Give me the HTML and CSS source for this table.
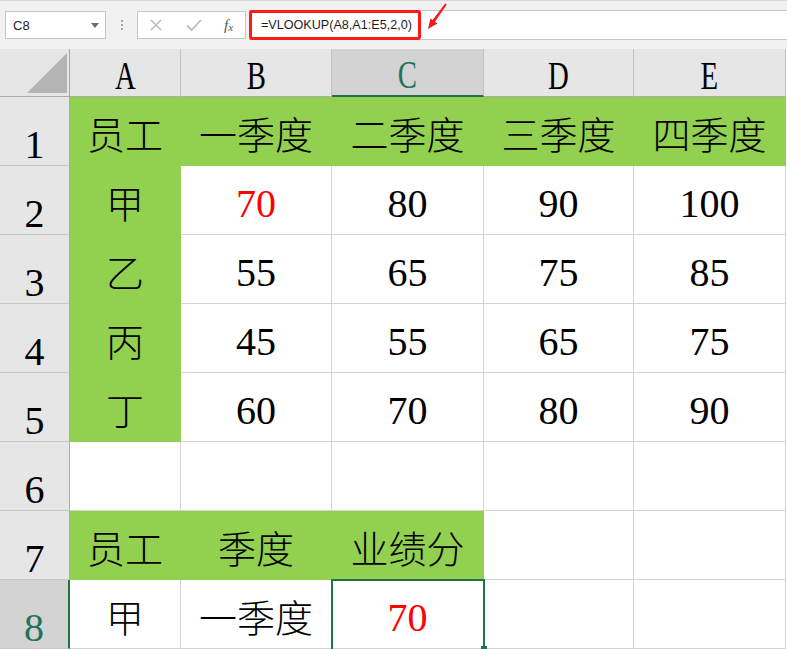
FILE: index.html
```html
<!DOCTYPE html>
<html lang="zh">
<head>
<meta charset="utf-8">
<title>VLOOKUP</title>
<link rel="stylesheet" href="styles.css">
</head>
<body>
<div class="toolbar">
  <div class="namebox"><span class="name">C8</span><span class="caret"></span></div>
  <div class="grip"><i></i><i></i><i></i></div>
  <div class="fxbox">
    <svg class="ico" width="12" height="12" viewBox="0 0 12 12"><path d="M1 1L11 11M11 1L1 11" stroke="#bdbdbd" stroke-width="1.6" fill="none"/></svg>
    <svg class="ico" width="16" height="12" viewBox="0 0 16 12"><path d="M1 6.5L5.5 11L15 1" stroke="#bdbdbd" stroke-width="1.8" fill="none"/></svg>
    <span class="fx">f<sub>x</sub></span>
  </div>
  <div class="formula"><div class="formula-box">=VLOOKUP(A8,A1:E5,2,0)</div></div>
  <svg class="arrow" width="32" height="34" viewBox="0 0 32 34"><polygon points="8,28 10.4,17.4 12.6,19 25.2,2.4 26.8,3.6 15,20.8 17.4,22.4" fill="#f21c1c"/></svg>
</div>
<div class="sheet">
  <div class="corner"><span class="tri"></span></div>
  <div class="ch"><span class="lt">A</span></div>
  <div class="ch"><span class="lt">B</span></div>
  <div class="ch ch-sel"><span class="lt">C</span></div>
  <div class="ch"><span class="lt">D</span></div>
  <div class="ch ch-last"><span class="lt">E</span></div>

  <div class="rh">1</div>
  <div class="c g">员工</div><div class="c g">一季度</div><div class="c g">二季度</div><div class="c g">三季度</div><div class="c g">四季度</div>

  <div class="rh">2</div>
  <div class="c g">甲</div><div class="c n red">70</div><div class="c n">80</div><div class="c n">90</div><div class="c n">100</div>

  <div class="rh">3</div>
  <div class="c g">乙</div><div class="c n">55</div><div class="c n">65</div><div class="c n">75</div><div class="c n">85</div>

  <div class="rh">4</div>
  <div class="c g">丙</div><div class="c n">45</div><div class="c n">55</div><div class="c n">65</div><div class="c n">75</div>

  <div class="rh">5</div>
  <div class="c g">丁</div><div class="c n">60</div><div class="c n">70</div><div class="c n">80</div><div class="c n">90</div>

  <div class="rh">6</div>
  <div class="c"></div><div class="c"></div><div class="c"></div><div class="c"></div><div class="c"></div>

  <div class="rh">7</div>
  <div class="c g">员工</div><div class="c g">季度</div><div class="c g">业绩分</div><div class="c"></div><div class="c"></div>

  <div class="rh rh-sel">8</div>
  <div class="c">甲</div><div class="c">一季度</div><div class="c n red sel">70</div><div class="c"></div><div class="c"></div>
</div>
</body>
</html>
```
FILE: styles.css
```css
html, body {
  margin: 0;
  padding: 0;
  background: #ffffff;
}
body {
  width: 787px;
  height: 649px;
  overflow: hidden;
}

/* ---------- toolbar ---------- */
.toolbar {
  position: relative;
  height: 49px;
  box-sizing: border-box;
  background: #f1f1f1;
  border-top: 1px solid #dadada;
  display: flex;
  align-items: flex-start;
  padding: 10px 0 0 5px;
  font-family: "Liberation Sans", "Noto Sans CJK SC", sans-serif;
}
.namebox {
  width: 101px;
  height: 28px;
  box-sizing: border-box;
  background: #fff;
  border: 1px solid #c6c6c6;
  display: flex;
  align-items: center;
  justify-content: space-between;
  padding: 0 6px 0 7px;
  font-size: 13px;
  color: #222;
}
.caret {
  width: 0;
  height: 0;
  border-left: 4px solid transparent;
  border-right: 4px solid transparent;
  border-top: 5px solid #6a6a6a;
}
.grip {
  width: 31px;
  height: 28px;
  display: flex;
  flex-direction: column;
  align-items: center;
  justify-content: center;
  gap: 2px;
}
.grip i {
  display: block;
  width: 2px;
  height: 2px;
  background: #a8a8a8;
}
.fxbox {
  width: 109px;
  height: 28px;
  box-sizing: border-box;
  background: #fff;
  border: 1px solid #c6c6c6;
  display: flex;
  align-items: center;
  padding-left: 12px;
}
.fxbox .ico:nth-child(1) { margin-right: 24px; }
.fxbox .ico:nth-child(2) { margin-right: 22px; }
.fx {
  font-family: "Liberation Serif", serif;
  font-style: italic;
  font-size: 15px;
  color: #555;
  line-height: 1;
}
.fx sub {
  font-size: 11px;
  vertical-align: -1px;
}
.formula {
  flex: 1;
  margin-left: 3px;
  height: 30px;
  margin-top: -1px;
  box-sizing: border-box;
  background: #fff;
  border-top: 1px solid #c6c6c6;
  border-bottom: 1px solid #c6c6c6;
}
.formula-box {
  width: 172px;
  height: 30px;
  margin-top: -1px;
  box-sizing: border-box;
  border: 3px solid #ff1a1a;
  border-radius: 3px;
  display: flex;
  align-items: center;
  padding-left: 9px;
  font-size: 12.6px;
  letter-spacing: 0;
  color: #1e1e1e;
  white-space: nowrap;
}
.arrow {
  position: absolute;
  left: 420px;
  top: 0;
}

/* ---------- sheet ---------- */
.sheet {
  display: grid;
  grid-template-columns: 70px 111px 151px 152px 150px 152px;
  grid-template-rows: 48px repeat(8, 69px);
  font-family: "Liberation Serif", "Noto Sans CJK SC", serif;
  color: #000;
}
.corner {
  position: relative;
  background: #e6e6e6;
  border-right: 1px solid #ababab;
  border-bottom: 1px solid #ababab;
  box-sizing: border-box;
}
.tri {
  position: absolute;
  right: 2px;
  bottom: 3px;
  width: 0;
  height: 0;
  border-left: 40px solid transparent;
  border-bottom: 40px solid #b4b4b4;
}
.ch {
  background: #e6e6e6;
  box-sizing: border-box;
  border-right: 1px solid #c2c2c2;
  border-bottom: 1px solid #ababab;
  display: flex;
  align-items: flex-end;
  justify-content: center;
  font-size: 40px;
  line-height: 1;
  padding-bottom: 0;
}
.ch-last { border-right-color: #c2c2c2; }
.ch-sel {
  background: #d3d3d3;
  color: #21735a;
  border-bottom: 2px solid #217346;
}
.lt {
  display: inline-block;
  transform: scaleX(0.72);
}
.rh {
  background: #e6e6e6;
  box-sizing: border-box;
  border-right: 1px solid #ababab;
  border-bottom: 1px solid #c8c8c8;
  display: flex;
  align-items: flex-end;
  justify-content: center;
  font-size: 40px;
  line-height: 1;
}
.rh-sel {
  background: #d3d3d3;
  color: #21735a;
  border-right: 2px solid #217346;
}
.c {
  box-sizing: border-box;
  border-right: 1px solid #d4d4d4;
  border-bottom: 1px solid #d4d4d4;
  display: flex;
  align-items: flex-end;
  justify-content: center;
  padding-bottom: 10px;
  font-size: 38px;
  line-height: 1;
  font-weight: 300;
  background: #fff;
}
.c.n {
  font-size: 40px;
  font-weight: 400;
}
.g {
  background: #92d050;
  border-color: #92d050;
}
.red { color: #ff0000; }
.sel { position: relative; }
.sel::after {
  content: "";
  position: absolute;
  left: -1px;
  top: -1px;
  width: 154px;
  height: 74px;
  box-sizing: border-box;
  border: 2px solid #217346;
}
.sel::before {
  content: "";
  position: absolute;
  right: -4px;
  top: 66px;
  width: 6px;
  height: 6px;
  background: #217346;
  z-index: 1;
}
```
